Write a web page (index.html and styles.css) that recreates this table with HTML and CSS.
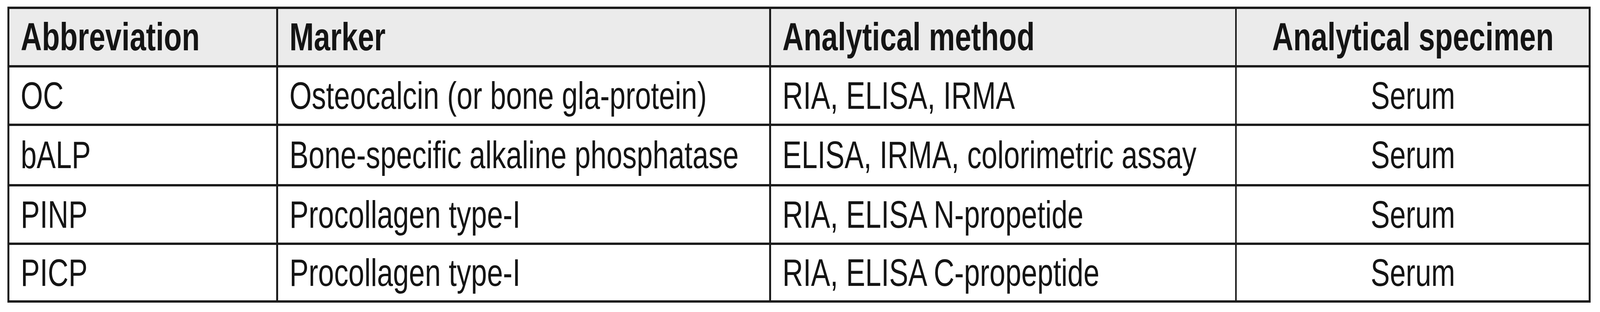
FILE: index.html
```html
<!DOCTYPE html>
<html lang="en">
<head>
<meta charset="utf-8">
<title>Bone formation markers</title>
<link rel="stylesheet" href="styles.css">
</head>
<body>
<div class="table" role="table">
  <div class="cell head" role="columnheader"><span class="txt">Abbreviation</span></div>
  <div class="cell head" role="columnheader"><span class="txt">Marker</span></div>
  <div class="cell head" role="columnheader"><span class="txt">Analytical method</span></div>
  <div class="cell head center" role="columnheader"><span class="txt">Analytical specimen</span></div>

  <div class="cell" role="cell"><span class="txt">OC</span></div>
  <div class="cell" role="cell"><span class="txt">Osteocalcin (or bone gla-protein)</span></div>
  <div class="cell" role="cell"><span class="txt">RIA, ELISA, IRMA</span></div>
  <div class="cell center" role="cell"><span class="txt">Serum</span></div>

  <div class="cell" role="cell"><span class="txt">bALP</span></div>
  <div class="cell" role="cell"><span class="txt">Bone-specific alkaline phosphatase</span></div>
  <div class="cell" role="cell"><span class="txt">ELISA, IRMA, colorimetric assay</span></div>
  <div class="cell center" role="cell"><span class="txt">Serum</span></div>

  <div class="cell" role="cell"><span class="txt">PINP</span></div>
  <div class="cell" role="cell"><span class="txt">Procollagen type-I</span></div>
  <div class="cell" role="cell"><span class="txt">RIA, ELISA N-propetide</span></div>
  <div class="cell center" role="cell"><span class="txt">Serum</span></div>

  <div class="cell" role="cell"><span class="txt">PICP</span></div>
  <div class="cell" role="cell"><span class="txt">Procollagen type-I</span></div>
  <div class="cell" role="cell"><span class="txt">RIA, ELISA C-propeptide</span></div>
  <div class="cell center" role="cell"><span class="txt">Serum</span></div>
</div>
</body>
</html>
```
FILE: styles.css
```css
:root {
  /* one pixel of the 5081px-wide design, scaled to the real viewport width */
  --u: calc(100vw / 5081);
  --sx: tan(atan2(100vw, 5081px));
}

html, body {
  margin: 0;
  padding: 0;
  background: #ffffff;
  overflow: hidden;
}

body {
  font-family: "Liberation Sans", Arial, Helvetica, sans-serif;
  color: #141414;
}

.table {
  display: grid;
  grid-template-columns:
    calc(847 * var(--u))
    calc(1560 * var(--u))
    calc(1473 * var(--u))
    calc(1117 * var(--u));
  grid-template-rows: 144px 144px 149px 144px 142px;
  row-gap: 6px;
  column-gap: calc(6 * var(--u));
  padding: 6px calc(6 * var(--u));
  background: #1c1c1c;
  width: max-content;
  margin: 17px 0 0 calc(24 * var(--u));
}

.cell {
  background: #ffffff;
  display: flex;
  align-items: center;
  padding-left: calc(36 * var(--u));
  font-size: 91px;
  line-height: 1;
  white-space: nowrap;
  overflow: hidden;
}

.head {
  background: #ebebeb;
  font-weight: bold;
  font-size: 93px;
}

.center {
  justify-content: center;
  padding-left: 0;
}

.txt {
  display: inline-block;
  transform: scaleX(var(--sx)) scaleY(1.07);
  transform-origin: 0 50%;
}

.center .txt {
  transform-origin: 50% 50%;
}
```
